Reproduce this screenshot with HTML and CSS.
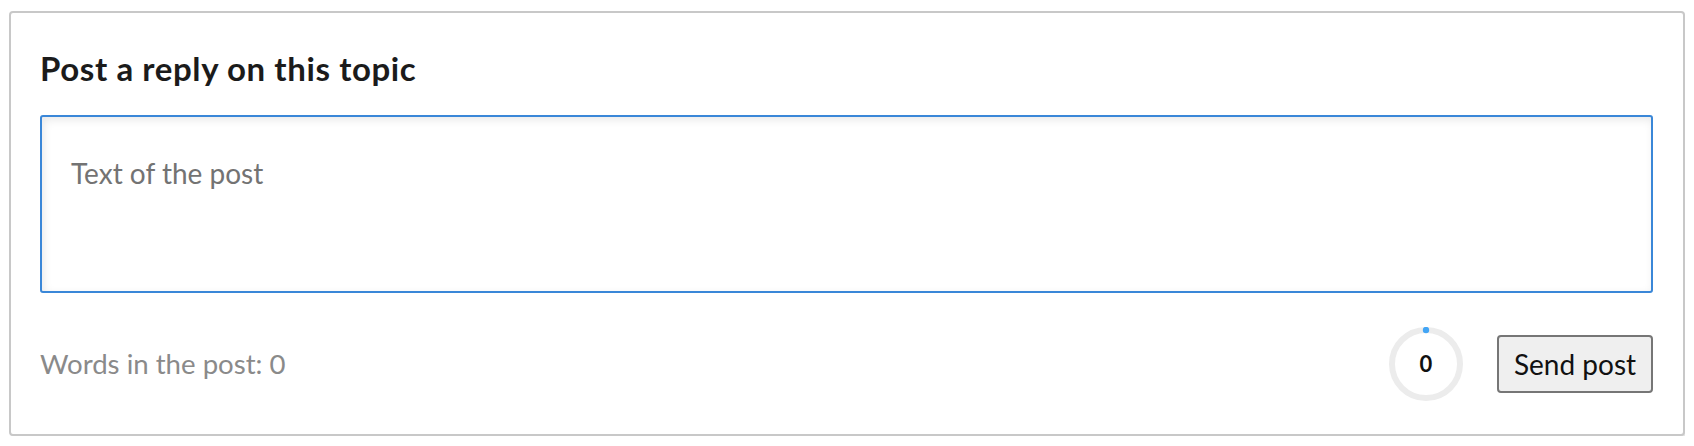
FILE: index.html
```html
<!DOCTYPE html>
<html lang="en">
<head>
<meta charset="utf-8">
<title>Post a reply</title>
<link rel="stylesheet" href="styles.css">
</head>
<body>
<section class="card">
  <h2 class="title">Post a reply on this topic</h2>
  <textarea class="post-text" placeholder="Text of the post"></textarea>
  <div class="footer">
    <span class="word-count">Words in the post: 0</span>
    <div class="actions">
      <div class="ring">
        <svg class="ring-svg" width="74" height="74" viewBox="0 0 74 74">
          <circle cx="37" cy="37" r="34" fill="none" stroke="#ececec" stroke-width="6"/>
          <circle cx="37" cy="3" r="3.2" fill="#42a5f5"/>
        </svg>
        <span class="ring-value">0</span>
      </div>
      <button class="send" type="button">Send post</button>
    </div>
  </div>
</section>
</body>
</html>
```
FILE: styles.css
```css
html, body {
  background: #ffffff;
}
body {
  margin: 11px 9px 0 9px;
  font-family: Lato, "Open Sans", "Liberation Sans", sans-serif;
}
.card {
  display: flex;
  flex-direction: column;
  border: 2px solid #c8c8c8;
  border-radius: 4px;
  box-shadow: 2px 3px 2px rgba(0, 0, 0, 0.1);
  padding: 36px 30px 33px 29px;
  background: #fff;
}
.title {
  margin: 0;
  font-size: 33px;
  line-height: 1.2;
  font-weight: 700;
  letter-spacing: 0.6px;
  color: #1b1b1b;
}
.post-text {
  display: block;
  box-sizing: border-box;
  width: 100%;
  height: 178px;
  margin: 26px 0 0 0;
  padding: 40px 29px 0 29px;
  border: 2px solid #3a87d8;
  border-radius: 3px;
  box-shadow: inset 2px 3px 8px rgba(0, 0, 0, 0.09);
  font-family: inherit;
  font-size: 28px;
  line-height: 1.2;
  color: #333;
  resize: none;
  outline: none;
}
.post-text::placeholder {
  color: #737373;
}
.footer {
  display: flex;
  align-items: center;
  justify-content: space-between;
  margin-top: 34px;
}
.word-count {
  font-size: 27.6px;
  color: #8a8a8a;
}
.actions {
  display: flex;
  align-items: center;
  gap: 34px;
}
.ring {
  position: relative;
  width: 74px;
  height: 74px;
}
.ring-svg {
  display: block;
}
.ring-value {
  position: absolute;
  inset: 0;
  display: flex;
  align-items: center;
  justify-content: center;
  font-size: 22px;
  font-weight: 700;
  color: #111;
}
.send {
  box-sizing: border-box;
  width: 156px;
  height: 58px;
  margin-right: 0;
  padding: 0;
  border: 2px solid #767676;
  border-radius: 4px;
  background: #efefef;
  font-family: inherit;
  font-size: 28px;
  color: #111;
}
```
